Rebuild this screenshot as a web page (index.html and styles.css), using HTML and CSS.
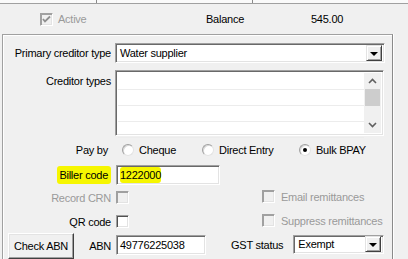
FILE: index.html
```html
<!DOCTYPE html>
<html lang="en">
<head>
    <meta charset="UTF-8">
    <title>Creditor</title>
    <link rel="stylesheet" href="styles.css">
</head>
<body>
    <div class="tabs">
        <span class="tab tab-a"></span>
        <span class="tab tab-b"></span>
        <span class="tab tab-c"></span>
    </div>

    <div class="status">
        <div class="active-box">
            <span class="chk chk-disabled">
                <svg width="9" height="9" viewBox="0 0 9 9"><polyline points="1,4 3,6.5 8,1.5" fill="none" stroke="#8f8f8f" stroke-width="1.8"/></svg>
            </span>
            <span class="muted">Active</span>
        </div>
        <span class="bal-label">Balance</span>
        <span class="bal-value">545.00</span>
    </div>

    <div class="panel">
        <div class="row row-primary">
            <span class="lbl">Primary creditor type</span>
            <div class="combo combo-wide">
                <span class="combo-text">Water supplier</span>
                <span class="drop"><span class="arrow"></span></span>
            </div>
        </div>

        <div class="row row-types">
            <span class="lbl lbl-top">Creditor types</span>
            <div class="listbox">
                <div class="list-rows">
                    <div class="list-row"></div>
                    <div class="list-row"></div>
                    <div class="list-row"></div>
                    <div class="list-row"></div>
                </div>
                <div class="scrollbar">
                    <svg class="chev" width="9" height="6" viewBox="0 0 9 6"><polyline points="1,5 4.5,1.5 8,5" fill="none" stroke="#606060" stroke-width="1.6"/></svg>
                    <div class="thumb"></div>
                    <div class="track"></div>
                    <svg class="chev" width="9" height="6" viewBox="0 0 9 6"><polyline points="1,1 4.5,4.5 8,1" fill="none" stroke="#606060" stroke-width="1.6"/></svg>
                </div>
            </div>
        </div>

        <div class="row row-pay">
            <span class="lbl lbl-pay">Pay by</span>
            <div class="radios">
                <span class="radio-item item-cheque"><span class="radio"></span>Cheque</span>
                <span class="radio-item item-direct"><span class="radio"></span>Direct Entry</span>
                <span class="radio-item"><span class="radio radio-on"></span>Bulk BPAY</span>
            </div>
        </div>

        <div class="row row-biller">
            <span class="lbl"><span class="hl hl-label">Biller code</span></span>
            <div class="edit edit-biller"><span class="hl hl-value">1222000</span></div>
        </div>

        <div class="row row-opt">
            <span class="lbl muted">Record CRN</span>
            <span class="chk chk-disabled"></span>
            <span class="right-opt"><span class="chk chk-disabled"></span><span class="muted">Email remittances</span></span>
        </div>

        <div class="row row-opt row-qr">
            <span class="lbl">QR code</span>
            <span class="chk"></span>
            <span class="right-opt"><span class="chk chk-disabled"></span><span class="muted">Suppress remittances</span></span>
        </div>

        <div class="row row-abn">
            <span class="lbl lbl-abn">
                <button class="btn">Check ABN</button>
                <span>ABN</span>
            </span>
            <div class="edit edit-abn">49776225038</div>
            <span class="gst-label">GST status</span>
            <div class="combo combo-gst">
                <span class="combo-text">Exempt</span>
                <span class="drop"><span class="arrow"></span></span>
            </div>
        </div>
    </div>
</body>
</html>
```

FILE: styles.css
```css
body {
    margin: 0;
    background-color: #f0f0f0;
    font-family: 'Liberation Sans', Arial, sans-serif;
    font-size: 11px;
    letter-spacing: -0.25px;
    color: #000;
    overflow: hidden;
}

.muted {
    color: #9a9a9a;
}

/* strip left over from the grid above */
.tabs {
    display: flex;
    height: 3px;
    background-color: #fafafa;
    border-bottom: 1px solid #a0a0a0;
}

.tab {
    border-right: 1px solid #8a8a8a;
}

.tab-a { width: 96px; }
.tab-b { width: 155px; }
.tab-c { flex: 1; border-right: none; }

.status {
    display: grid;
    grid-template-columns: 166px 105px auto;
    align-items: center;
    height: 30px;
    padding-left: 40px;
}

.active-box {
    display: flex;
    align-items: center;
    gap: 5px;
}

/* checkboxes */
.chk {
    display: inline-flex;
    align-items: center;
    justify-content: center;
    box-sizing: border-box;
    width: 13px;
    height: 13px;
    background-color: #fff;
    border: 1px solid;
    border-color: #a0a0a0 #fff #fff #a0a0a0;
    box-shadow: inset 1px 1px 0 #505050, inset -1px -1px 0 #e3e3e3;
}

.chk-disabled {
    background-color: #f0f0f0;
    border-color: #a0a0a0 #fff #fff #a0a0a0;
    box-shadow: inset 1px 1px 0 #a0a0a0, inset -1px -1px 0 #e3e3e3;
}

.panel {
    box-sizing: border-box;
    width: 391px;
    height: 225px;
    margin-left: 2px;
    padding-top: 8px;
    border: 1px solid #a0a0a0;
    border-right-color: #8a8a8a;
    border-bottom: none;
    box-shadow: inset 1px 1px 0 #fff, 1px 0 0 #fff;
}

.row {
    display: flex;
    align-items: center;
}

.lbl {
    box-sizing: border-box;
    width: 108px;
    flex-shrink: 0;
    margin-right: 5px;
    text-align: right;
}

.lbl-top {
    align-self: flex-start;
    margin-top: 5px;
}

/* combo boxes */
.combo {
    box-sizing: border-box;
    display: flex;
    align-items: center;
    height: 20px;
    background-color: #fff;
    border: 1px solid;
    border-color: #a0a0a0 #fff #fff #a0a0a0;
    box-shadow: inset 1px 1px 0 #696969, inset -1px -1px 0 #e3e3e3;
    padding: 2px 2px 2px 4px;
}

.combo-wide {
    width: 270px;
    margin-left: -1px;
}

.combo-text {
    flex: 1;
}

.drop {
    box-sizing: border-box;
    display: flex;
    align-items: center;
    justify-content: center;
    width: 16px;
    height: 16px;
    background-color: #f0f0f0;
    border: 1px solid;
    border-color: #e3e3e3 #404040 #404040 #e3e3e3;
    box-shadow: inset 1px 1px 0 #fff, inset -1px -1px 0 #a0a0a0;
}

.arrow {
    width: 0;
    height: 0;
    border-left: 4px solid transparent;
    border-right: 4px solid transparent;
    border-top: 4px solid #000;
    margin-top: 1px;
}

/* list box */
.row-types {
    margin-top: 7px;
    align-items: flex-start;
}

.listbox {
    box-sizing: border-box;
    display: flex;
    width: 269px;
    height: 66px;
    margin-left: -1px;
    background-color: #fff;
    border: 1px solid;
    border-color: #a0a0a0 #fff #fff #a0a0a0;
    box-shadow: inset 1px 1px 0 #696969, inset -1px -1px 0 #e3e3e3;
    padding: 2px 2px 2px 2px;
}

.list-rows {
    flex: 1;
    padding-top: 1px;
}

.list-row {
    height: 15px;
    border-bottom: 1px solid #ececec;
}

.scrollbar {
    display: flex;
    flex-direction: column;
    align-items: center;
    width: 17px;
    background-color: #f0f0f0;
}

.chev {
    margin: 5px 0;
    flex-shrink: 0;
}

.thumb {
    width: 15px;
    height: 17px;
    background-color: #cdcdcd;
}

.track {
    flex: 1;
}

/* pay by */
.row-pay {
    margin-top: 4px;
    height: 20px;
}

.lbl-pay {
    padding-right: 3px;
}

.radios {
    display: flex;
    margin-left: 6px;
}

.radio-item {
    display: flex;
    align-items: center;
    gap: 5px;
}

.item-cheque { width: 80px; }
.item-direct { width: 97px; }

.radio {
    display: inline-flex;
    align-items: center;
    justify-content: center;
    box-sizing: border-box;
    width: 12px;
    height: 12px;
    border-radius: 50%;
    background-color: #fff;
    border: 1px solid;
    border-color: #a0a0a0 #e3e3e3 #e3e3e3 #a0a0a0;
    box-shadow: inset 1px 1px 0 #d8d8d8;
}

.radio-on::after {
    content: "";
    width: 4px;
    height: 4px;
    border-radius: 50%;
    background-color: #000;
}

/* biller code */
.row-biller {
    margin-top: 5px;
}

.hl {
    background-color: #f6f600;
    border-radius: 3px;
}

.hl-label {
    padding: 3px 3px 3px 2px;
}

.hl-value {
    padding: 2px 0;
}

.edit {
    box-sizing: border-box;
    height: 20px;
    background-color: #fff;
    border: 1px solid;
    border-color: #a0a0a0 #fff #fff #a0a0a0;
    box-shadow: inset 1px 1px 0 #696969, inset -1px -1px 0 #e3e3e3;
    padding: 3px 3px;
    line-height: 12px;
}

.edit-biller {
    width: 104px;
}

/* option rows */
.row-opt {
    margin-top: 4px;
    height: 17px;
}

.row-qr {
    margin-top: 7px;
}

.right-opt {
    display: flex;
    align-items: center;
    gap: 6px;
    margin-left: 133px;
    margin-top: -2px;
}

/* abn row */
.row-abn {
    margin-top: 2px;
    height: 27px;
}

.lbl-abn {
    display: flex;
    align-items: center;
    justify-content: space-between;
    padding-left: 5px;
}

.btn {
    box-sizing: border-box;
    width: 66px;
    height: 26px;
    padding: 0;
    font: inherit;
    letter-spacing: inherit;
    color: #000;
    background-color: #f0f0f0;
    border: 1px solid;
    border-color: #fff #404040 #404040 #fff;
    box-shadow: inset -1px -1px 0 #a0a0a0, inset 1px 1px 0 #e3e3e3;
}

.edit-abn {
    width: 90px;
    margin-top: -2px;
}

.gst-label {
    margin-left: 25px;
    margin-top: -2px;
}

.combo-gst {
    width: 91px;
    height: 19px;
    margin-left: 10px;
    margin-top: -3px;
    padding: 1px 2px 1px 4px;
}
```
